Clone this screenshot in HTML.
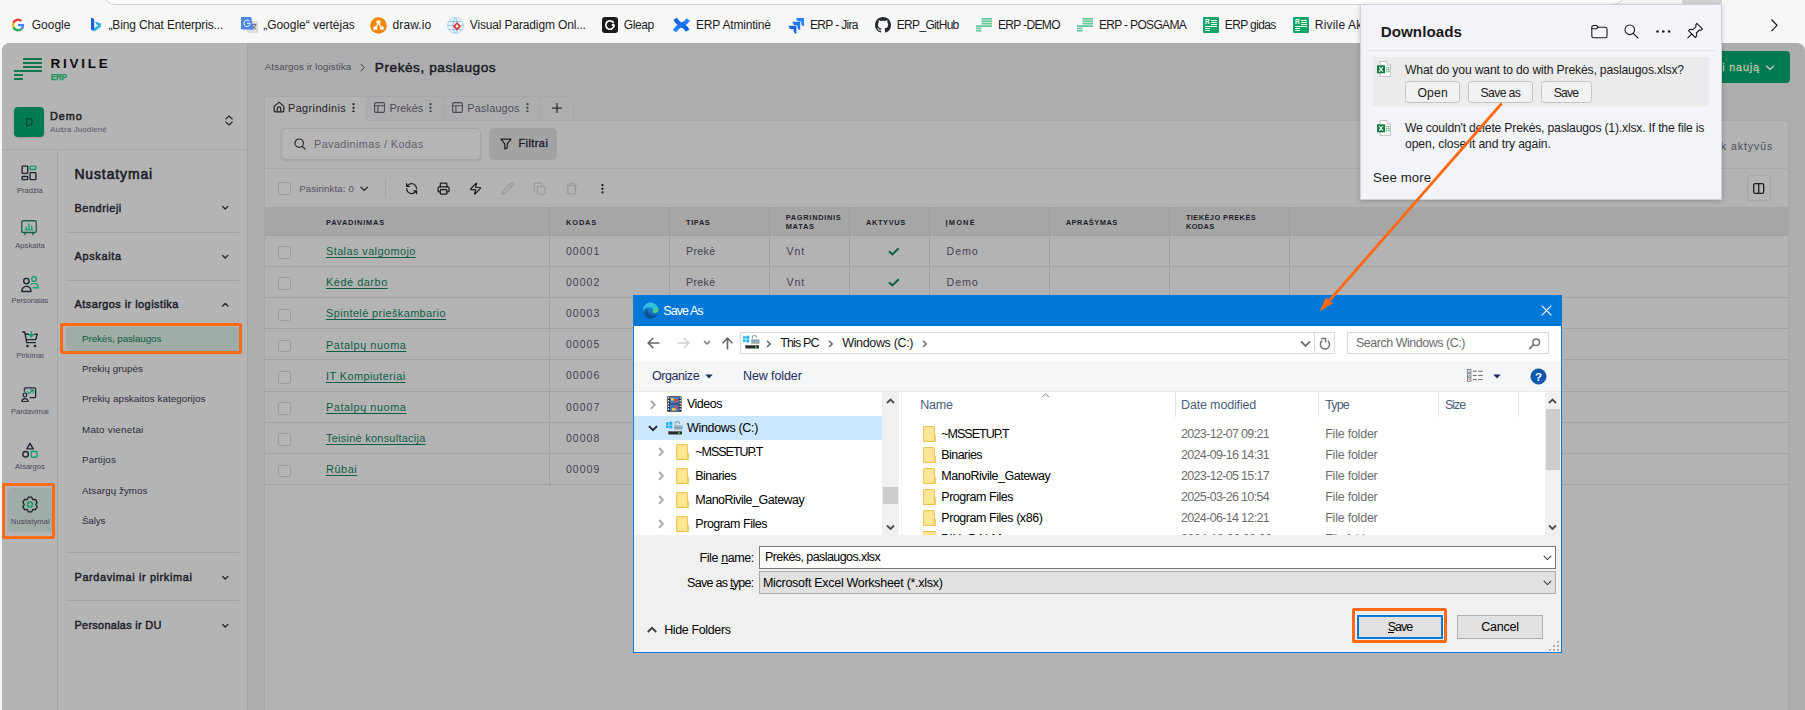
<!DOCTYPE html><html><head><meta charset="utf-8"><title>Save As</title><style>
*{margin:0;padding:0;box-sizing:border-box}
html,body{width:1805px;height:710px;overflow:hidden;background:#f7f7f7}
body{font-family:"Liberation Sans",sans-serif;position:relative}
.b{position:absolute;display:block}
.t,.t2{position:absolute;display:block;white-space:pre;line-height:1;font-family:"Liberation Sans",sans-serif}
</style></head><body>
<div class="b" style="left:0px;top:0px;width:1805px;height:43px;background:#f7f7f7;"></div>
<div class="b" style="left:102.5px;top:-20px;width:1522.5px;height:24.8px;background:#ffffff;border-radius:12px;border:1px solid #d2d2d2;"></div>
<div class="b" style="left:1682px;top:-4px;width:40px;height:7.6px;background:#d4d4d4;border-radius:3px;"></div>
<span class="t" style="left:31.700000000000003px;top:19.000px;font-size:12px;color:#1b1b1b;letter-spacing:0.019px;">Google</span>
<span class="t" style="left:108.5px;top:19.000px;font-size:12px;color:#1b1b1b;letter-spacing:-0.148px;">„Bing Chat Enterpris...</span>
<span class="t" style="left:263.2px;top:19.000px;font-size:12px;color:#1b1b1b;letter-spacing:-0.028px;">„Google“ vertėjas</span>
<span class="t" style="left:392.5px;top:19.000px;font-size:12px;color:#1b1b1b;letter-spacing:0.128px;">draw.io</span>
<span class="t" style="left:469.8px;top:19.000px;font-size:12px;color:#1b1b1b;letter-spacing:-0.146px;">Visual Paradigm Onl...</span>
<span class="t" style="left:623.7px;top:19.000px;font-size:12px;color:#1b1b1b;letter-spacing:-0.358px;">Gleap</span>
<span class="t" style="left:696.0px;top:19.000px;font-size:12px;color:#1b1b1b;letter-spacing:-0.180px;">ERP Atmintinė</span>
<span class="t" style="left:810.0px;top:19.000px;font-size:12px;color:#1b1b1b;letter-spacing:-0.663px;">ERP - Jira</span>
<span class="t" style="left:896.8px;top:19.000px;font-size:12px;color:#1b1b1b;letter-spacing:-0.689px;">ERP_GitHub</span>
<span class="t" style="left:997.9px;top:19.000px;font-size:12px;color:#1b1b1b;letter-spacing:-0.650px;">ERP -DEMO</span>
<span class="t" style="left:1099.0px;top:19.000px;font-size:12px;color:#1b1b1b;letter-spacing:-0.668px;">ERP - POSGAMA</span>
<span class="t" style="left:1224.8px;top:19.000px;font-size:12px;color:#1b1b1b;letter-spacing:-0.623px;">ERP gidas</span>
<span class="t" style="left:1314.8px;top:19.000px;font-size:12px;color:#1b1b1b;letter-spacing:0.186px;">Rivile Ak</span>
<svg class="b" style="left:10.3px;top:17px;" width="16" height="16" viewBox="0 0 16 16"><circle cx="8" cy="8" r="8" fill="#fff"/>
<path d="M14.2 8.15c0-.5-.04-.87-.13-1.25H8.1v2.28h3.5c-.07.57-.45 1.42-1.3 2l2 1.56c1.2-1.1 1.9-2.74 1.9-4.6z" fill="#4285f4"/>
<path d="M8.1 14.4c1.72 0 3.17-.57 4.22-1.55l-2-1.56c-.54.38-1.26.64-2.2.64-1.7 0-3.12-1.1-3.63-2.65l-2.07 1.6C3.46 12.96 5.6 14.4 8.1 14.4z" fill="#34a853"/>
<path d="M4.47 9.28A3.9 3.9 0 0 1 4.26 8c0-.44.08-.87.2-1.27L2.4 5.12A6.4 6.4 0 0 0 1.7 8c0 1.03.25 2 .7 2.87l2.07-1.6z" fill="#fbbc05"/>
<path d="M8.1 4.07c1.2 0 2 .52 2.47.95l1.8-1.76C11.26 2.23 9.82 1.6 8.1 1.6 5.6 1.6 3.46 3.04 2.4 5.12l2.07 1.6C4.98 5.18 6.4 4.07 8.1 4.07z" fill="#ea4335"/></svg>
<svg class="b" style="left:88.3px;top:17px;" width="16" height="16" viewBox="0 0 16 16"><defs><linearGradient id="bg1" x1="0" y1="0" x2="1" y2="1"><stop offset="0" stop-color="#2a7be4"/><stop offset="1" stop-color="#35d0e6"/></linearGradient></defs>
<path d="M3 .8l3.1 1.1v9l4.2-2.3-2-1-1.3-3.1 6 2.1v3.3L6.2 14.6 3 12.8z" fill="url(#bg1)"/>
<path d="M3 .8l3.1 1.1v10.9L3 12.8z" fill="#1b5fd6"/></svg>
<svg class="b" style="left:240.8px;top:17.3px;" width="17" height="17" viewBox="0 0 17 17"><rect x="6" y="4" width="11" height="12" rx="1.2" fill="#dcdcdc"/>
<path d="M10.5 7.5h5M13 6.5v1M11.3 7.5c.4 2 2 3.8 3.9 4.6M14.8 7.5c-.5 2-2 3.9-4 4.8" stroke="#5f6368" stroke-width=".9" fill="none"/>
<path d="M1.2 0h9l2.3 12.5H1.2A1.2 1.2 0 0 1 0 11.3V1.2A1.2 1.2 0 0 1 1.2 0z" fill="#4a86e8"/>
<path d="M6 6.2h3c0 2-1.3 3.3-3 3.3a3.2 3.2 0 1 1 2.2-5.6" stroke="#fff" stroke-width="1" fill="none"/></svg>
<svg class="b" style="left:370px;top:17px;" width="17" height="17" viewBox="0 0 17 17"><circle cx="8.5" cy="8.5" r="8.3" fill="#f08705"/>
<path d="M8.5 6l-3.2 5M8.5 6l3.2 5" stroke="#fff" stroke-width="1.2"/>
<rect x="6.6" y="3.6" width="3.8" height="3.2" rx=".6" fill="#fff"/><rect x="3.4" y="9.6" width="3.8" height="3.2" rx=".6" fill="#fff"/><rect x="9.8" y="9.6" width="3.8" height="3.2" rx=".6" fill="#fff"/></svg>
<svg class="b" style="left:447px;top:17px;" width="17" height="17" viewBox="0 0 17 17"><circle cx="8.5" cy="8.5" r="8" fill="#e8f3fb" stroke="#9ecbe8" stroke-width=".8"/>
<path d="M1 8.5h15M8.5 1c-3 2-3 13 0 15M8.5 1c3 2 3 13 0 15M2.5 4.5h12M2.5 12.500h12" stroke="#6ab0dc" stroke-width=".7" fill="none"/>
<path d="M10 5l4 4.2-4 4.200-4-4.200z" fill="#e02b2b"/><path d="M10 7.300l1.800 1.900-1.800 1.900-1.800-1.900z" fill="#fff"/></svg>
<svg class="b" style="left:602px;top:17px;" width="16" height="16" viewBox="0 0 16 16"><rect width="16" height="16" rx="3" fill="#1a1a1a"/>
<path d="M11.300 5.400A4.200 4.200 0 1 0 12.200 8.300" stroke="#fff" stroke-width="1.700" fill="none" stroke-linecap="round"/><circle cx="11" cy="8" r="1.300" fill="#fff"/></svg>
<svg class="b" style="left:673.3px;top:17px;" width="17" height="16" viewBox="0 0 17 16"><defs><linearGradient id="cf1" x1="0" y1="0" x2="1" y2="0"><stop offset="0" stop-color="#0b5bd8"/><stop offset="1" stop-color="#2a86ff"/></linearGradient><linearGradient id="cf2" x1="1" y1="0" x2="0" y2="0"><stop offset="0" stop-color="#0b5bd8"/><stop offset="1" stop-color="#2a86ff"/></linearGradient></defs>
<path d="M2.200 1.800Q8.300 12.500 15.200 2.600" stroke="url(#cf1)" stroke-width="4.300" fill="none"/>
<path d="M1.600 14.200Q8.300 3.500 14.600 13.600" stroke="url(#cf2)" stroke-width="4.300" fill="none"/></svg>
<svg class="b" style="left:788px;top:17px;" width="17" height="17" viewBox="0 0 17 17"><path d="M16 1H8.300a3.500 3.500 0 0 0 3.500 3.500h1.400v1.400A3.500 3.500 0 0 0 16 9.300z" fill="#2684ff"/>
<path d="M12.200 4.800H4.500A3.500 3.500 0 0 0 8 8.300h1.400v1.400a3.500 3.500 0 0 0 2.800 3.400z" fill="#2176ea"/>
<path d="M8.400 8.700H.7a3.500 3.500 0 0 0 3.500 3.500h1.400v1.400A3.500 3.500 0 0 0 8.400 17z" fill="#1c63d6"/></svg>
<svg class="b" style="left:875px;top:17px;" width="16" height="16" viewBox="0 0 16 16"><path fill="#24292f" d="M8 0C3.580 0 0 3.580 0 8c0 3.540 2.290 6.530 5.470 7.590.4.070.55-.17.55-.38 0-.19-.01-.82-.01-1.490-2.010.37-2.530-.49-2.690-.94-.09-.23-.48-.94-.82-1.130-.28-.15-.68-.52-.01-.53.630-.01 1.080.58 1.230.82.720 1.210 1.870.87 2.330.66.070-.52.280-.87.510-1.070-1.780-.2-3.640-.89-3.640-3.950 0-.87.310-1.590.82-2.150-.08-.2-.36-1.020.08-2.120 0 0 .67-.21 2.200.82.640-.18 1.320-.27 2-.27s1.360.09 2 .27c1.530-1.040 2.200-.82 2.200-.82.440 1.100.16 1.920.08 2.120.51.560.82 1.270.82 2.150 0 3.070-1.870 3.750-3.650 3.950.29.250.54.730.54 1.480 0 1.070-.01 1.930-.01 2.200 0 .21.150.46.550.38A8.010 8.010 0 0 0 16 8c0-4.420-3.580-8-8-8z"/></svg>
<svg class="b" style="left:976px;top:17px;" width="17" height="17" viewBox="0 0 17 17"><g fill="#63c79b"><rect x="5.500" y="1" width="10.500" height="1.700"/><rect x="5.500" y="3.400" width="10.500" height="1.700"/><rect x="5.500" y="5.800" width="10.500" height="1.700"/>
<rect x="0" y="8.200" width="16" height="1.800"/><rect x="0" y="10.700" width="5.500" height="1.600"/><rect x="0" y="13" width="5.500" height="1.600"/></g></svg>
<svg class="b" style="left:1077px;top:17px;" width="17" height="17" viewBox="0 0 17 17"><g fill="#63c79b"><rect x="5.500" y="1" width="10.500" height="1.700"/><rect x="5.500" y="3.400" width="10.500" height="1.700"/><rect x="5.500" y="5.800" width="10.500" height="1.700"/>
<rect x="0" y="8.200" width="16" height="1.800"/><rect x="0" y="10.700" width="5.500" height="1.600"/><rect x="0" y="13" width="5.500" height="1.600"/></g></svg>
<svg class="b" style="left:1203px;top:17px;" width="16" height="16" viewBox="0 0 16 16"><rect width="16" height="16" rx="1" fill="#12a568"/>
<text x="2" y="7.300" font-family="Liberation Sans" font-weight="700" font-size="6.500" fill="#fff">R</text>
<g fill="#e9fff4"><rect x="8" y="3" width="6" height="1"/><rect x="8" y="5" width="6" height="1"/><rect x="8" y="7" width="6" height="1"/><rect x="2" y="9" width="12" height="1"/><rect x="2" y="11" width="5" height="1"/><rect x="2" y="13" width="5" height="1"/></g></svg>
<svg class="b" style="left:1293px;top:17px;" width="16" height="16" viewBox="0 0 16 16"><rect width="16" height="16" rx="1" fill="#12a568"/>
<text x="2" y="7.300" font-family="Liberation Sans" font-weight="700" font-size="6.500" fill="#fff">R</text>
<g fill="#e9fff4"><rect x="8" y="3" width="6" height="1"/><rect x="8" y="5" width="6" height="1"/><rect x="8" y="7" width="6" height="1"/><rect x="2" y="9" width="12" height="1"/><rect x="2" y="11" width="5" height="1"/><rect x="2" y="13" width="5" height="1"/></g></svg>
<svg class="b" style="left:1768px;top:17px;" width="14" height="16" viewBox="0 0 14 16"><path d="M3.500 2.500l5.500 5.800-5.500 5.800" stroke="#1b1b1b" stroke-width="1.200" fill="none"/></svg>
<div class="b" style="left:2px;top:43px;width:1803px;height:667px;background:#adadaf;border-radius:8px 8px 0 0;"></div>
<div class="b" style="left:2px;top:43px;width:245px;height:667px;background:#b4b4b4;border-radius:8px 0 0 0;"></div>
<div class="b" style="left:247px;top:43px;width:1px;height:667px;background:#a4a4a4;"></div>
<div class="b" style="left:23.1px;top:58px;width:18.8px;height:2px;background:#0d7a4d;"></div>
<div class="b" style="left:23.1px;top:62px;width:18.8px;height:2px;background:#0d7a4d;"></div>
<div class="b" style="left:23.1px;top:66px;width:18.8px;height:2px;background:#0d7a4d;"></div>
<div class="b" style="left:14.1px;top:70px;width:27.8px;height:2px;background:#0d7a4d;"></div>
<div class="b" style="left:14.1px;top:74px;width:9.2px;height:2px;background:#0d7a4d;"></div>
<div class="b" style="left:14.1px;top:78px;width:9.2px;height:1.9px;background:#0d7a4d;"></div>
<span class="t" style="left:50.4px;top:57.000px;font-size:13.5px;color:#0c0c0c;font-weight:700;letter-spacing:2.757px;">RIVILE</span>
<span class="t" style="left:50.7px;top:74.000px;font-size:8.2px;color:#1e9560;font-weight:700;letter-spacing:-0.222px;-webkit-text-stroke:.25px #1e9560;">ERP</span>
<div class="b" style="left:14px;top:107px;width:30px;height:30px;background:#007a53;border-radius:4px;box-shadow:0 1px 2px rgba(0,0,0,.15);"></div>
<span class="t" style="left:25.2px;top:117.000px;font-size:11px;color:#0b3d2c;">D</span>
<span class="t" style="left:50px;top:111.000px;font-size:10.8px;color:#1c1c1c;letter-spacing:0.996px;-webkit-text-stroke:.5px #1c1c1c;">Demo</span>
<span class="t" style="left:50px;top:126.000px;font-size:8px;color:#5c5867;letter-spacing:0.093px;">Aušra Juodienė</span>
<svg class="b" style="left:224px;top:115px;" width="10" height="11" viewBox="0 0 10 11"><path d="M1.800 4l3.200-3 3.200 3M1.800 7l3.200 3 3.200-3" stroke="#222" stroke-width="1.100" fill="none" stroke-linecap="round" stroke-linejoin="round"/></svg>
<div class="b" style="left:2px;top:149px;width:245px;height:1px;background:#a6a6a6;"></div>
<div class="b" style="left:57px;top:150px;width:1px;height:560px;background:#a6a6a6;"></div>
<svg class="b" style="left:21.1px;top:165.1px;" width="16" height="16" viewBox="0 0 16 16"><rect x="1.100" y="1.100" width="5.600" height="7.300" rx=".600" stroke="#1e2430" stroke-width="1.350" fill="none" stroke-linecap="round" stroke-linejoin="round"/><rect x="1.100" y="11.500" width="5.600" height="3.100" rx=".600" stroke="#1e2430" stroke-width="1.350" fill="none" stroke-linecap="round" stroke-linejoin="round"/><rect x="9.100" y="7.600" width="5.800" height="7" rx=".600" stroke="#1e2430" stroke-width="1.350" fill="none" stroke-linecap="round" stroke-linejoin="round"/><rect x="9.100" y="1.100" width="5.800" height="3.400" rx=".600" stroke="#12a06e" stroke-width="1.350" fill="none" stroke-linecap="round" stroke-linejoin="round"/></svg>
<svg class="b" style="left:21.1px;top:220.1px;" width="16" height="16" viewBox="0 0 16 16"><rect x=".700" y=".700" width="14.600" height="11.800" rx="1.500" stroke="#1f5f49" stroke-width="1.350" fill="none"/><path d="M4.600 12.600l-.800 2M11.400 12.600l.800 2" stroke="#1f5f49" stroke-width="1.350" stroke-linecap="round"/><path d="M4.300 9.800h7.400M5.300 9.600v-2.200M8 9.600v-5.600M10.700 9.600v-3.400" stroke="#12a06e" stroke-width="1.350" fill="none" stroke-linecap="round" stroke-linejoin="round"/></svg>
<svg class="b" style="left:20.5px;top:275.5px;" width="18" height="17" viewBox="0 0 18 17"><circle cx="5.400" cy="5" r="2.700" stroke="#1e2430" stroke-width="1.350" fill="none" stroke-linecap="round" stroke-linejoin="round"/><path d="M.800 15.500c0-3.200 2-5.100 4.600-5.100s4.600 1.900 4.600 5.100z" stroke="#1e2430" stroke-width="1.350" fill="none" stroke-linecap="round" stroke-linejoin="round"/><circle cx="13.100" cy="3" r="2.400" stroke="#12a06e" stroke-width="1.350" fill="none" stroke-linecap="round" stroke-linejoin="round"/><path d="M10 8.300c.8-.7 1.900-1 3.100-1 2.300 0 4.100 1.600 4.100 4.400h-5" stroke="#12a06e" stroke-width="1.350" fill="none" stroke-linecap="round" stroke-linejoin="round"/></svg>
<svg class="b" style="left:21.5px;top:330.5px;" width="17" height="17" viewBox="0 0 17 17"><path d="M.700 1h2l2 10.600h8.800M4.200 8.600h9.500l1.600-5.400h-2.500M3.300 3.200h3" stroke="#1e2430" stroke-width="1.350" fill="none" stroke-linecap="round" stroke-linejoin="round"/><circle cx="5.500" cy="15" r="1.300" fill="#1e2430"/><circle cx="13" cy="15" r="1.300" fill="#1e2430"/><path d="M9.300 .600v4.600M7.300 3.600l2 2.300 2-2.300z" stroke="#12a06e" stroke-width="1.400" fill="#12a06e" stroke-linejoin="round"/></svg>
<svg class="b" style="left:21.3px;top:386.7px;" width="15.81" height="15.81" viewBox="0 0 17 17"><path d="M3.600 4.500v-2.200a1.300 1.300 0 0 1 1.300-1.300h9.500a1.300 1.300 0 0 1 1.300 1.300v7.800a1.300 1.300 0 0 1-1.300 1.300h-4.600" stroke="#1e2430" stroke-width="1.350" fill="none" stroke-linecap="round" stroke-linejoin="round"/><circle cx="4.200" cy="8.600" r="2" stroke="#1e2430" stroke-width="1.350" fill="none" stroke-linecap="round" stroke-linejoin="round"/><path d="M.900 15.800c0-2 1.400-3.200 3.300-3.200s3.300 1.200 3.300 3.200z" stroke="#1e2430" stroke-width="1.350" fill="none" stroke-linecap="round" stroke-linejoin="round"/><path d="M6.500 5l2 2 4.500-3.800M10.300 3h2.900v2.900" stroke="#12a06e" stroke-width="1.350" fill="none" stroke-linecap="round" stroke-linejoin="round"/></svg>
<svg class="b" style="left:21.5px;top:441.5px;" width="17" height="16" viewBox="0 0 17 16"><path d="M8 1.300l3.200 5.500h-6.400z" stroke="#1e2430" stroke-width="1.350" fill="none" stroke-linecap="round" stroke-linejoin="round"/><circle cx="3.600" cy="12.300" r="2.800" stroke="#1e2430" stroke-width="1.350" fill="none" stroke-linecap="round" stroke-linejoin="round"/><rect x="9.300" y="9.500" width="5.700" height="5.700" rx=".800" stroke="#12a06e" stroke-width="1.350" fill="none" stroke-linecap="round" stroke-linejoin="round"/></svg>
<div class="b" style="left:8px;top:488px;width:44px;height:44px;background:#a0aca6;border-radius:4px;"></div>
<svg class="b" style="left:21.5px;top:496px;" width="16" height="17" viewBox="0 0 16 17"><path d="M9.69 1.19L6.31 1.19L5.15 3.56L2.51 3.39L0.83 6.31L2.30 8.50L0.83 10.69L2.51 13.61L5.15 13.44L6.31 15.81L9.69 15.81L10.85 13.44L13.49 13.61L15.17 10.69L13.70 8.50L15.17 6.31L13.49 3.39L10.85 3.56z" stroke="#1e2430" stroke-width="1.300" fill="none" stroke-linejoin="round"/><circle cx="8" cy="8.500" r="2.500" stroke="#12a06e" stroke-width="1.500" fill="none"/></svg>
<span class="t" style="left:16.9px;top:187.000px;font-size:7.6px;color:#4a4656;letter-spacing:0.008px;">Pradžia</span>
<span class="t" style="left:15.2px;top:242.000px;font-size:7.6px;color:#4a4656;letter-spacing:0.066px;">Apskaita</span>
<span class="t" style="left:11.5px;top:297.000px;font-size:7.6px;color:#4a4656;letter-spacing:-0.122px;">Personalas</span>
<span class="t" style="left:16.3px;top:352.000px;font-size:7.6px;color:#4a4656;letter-spacing:0.069px;">Pirkimai</span>
<span class="t" style="left:11px;top:408.000px;font-size:7.6px;color:#4a4656;letter-spacing:-0.020px;">Pardavimai</span>
<span class="t" style="left:15px;top:463.000px;font-size:7.6px;color:#4a4656;letter-spacing:-0.024px;">Atsargos</span>
<span class="t" style="left:10.8px;top:518.000px;font-size:7.6px;color:#4a4656;letter-spacing:0.113px;">Nustatymai</span>
<span class="t" style="left:74.4px;top:168.000px;font-size:13.9px;color:#1d1d27;letter-spacing:0.924px;-webkit-text-stroke:.6px #1d1d27;">Nustatymai</span>
<span class="t" style="left:74.5px;top:203.000px;font-size:10.9px;color:#1d1d27;letter-spacing:0.551px;-webkit-text-stroke:.45px #1d1d27;">Bendrieji</span>
<svg class="b" style="left:220.60000000000002px;top:204.3px;" width="8.4" height="7.4" viewBox="0 0 8.4 7.4"><path d="M1.600 2.400l2.600 2.600 2.600-2.600" stroke="#222" stroke-width="1.350" fill="none" stroke-linecap="round" stroke-linejoin="round"/></svg>
<span class="t" style="left:74.5px;top:251.000px;font-size:10.9px;color:#1d1d27;letter-spacing:0.674px;-webkit-text-stroke:.45px #1d1d27;">Apskaita</span>
<svg class="b" style="left:220.60000000000002px;top:252.7px;" width="8.4" height="7.4" viewBox="0 0 8.4 7.4"><path d="M1.600 2.400l2.600 2.600 2.600-2.600" stroke="#222" stroke-width="1.350" fill="none" stroke-linecap="round" stroke-linejoin="round"/></svg>
<span class="t" style="left:74.5px;top:299.000px;font-size:10.9px;color:#1d1d27;letter-spacing:0.469px;-webkit-text-stroke:.45px #1d1d27;">Atsargos ir logistika</span>
<svg class="b" style="left:220.60000000000002px;top:300.6px;" width="8.4" height="7.4" viewBox="0 0 8.4 7.4"><path d="M1.600 5l2.600-2.600 2.600 2.600" stroke="#222" stroke-width="1.350" fill="none" stroke-linecap="round" stroke-linejoin="round"/></svg>
<span class="t" style="left:74.5px;top:572.000px;font-size:10.9px;color:#1d1d27;letter-spacing:0.629px;-webkit-text-stroke:.45px #1d1d27;">Pardavimai ir pirkimai</span>
<svg class="b" style="left:220.60000000000002px;top:573.5px;" width="8.4" height="7.4" viewBox="0 0 8.4 7.4"><path d="M1.600 2.400l2.600 2.600 2.600-2.600" stroke="#222" stroke-width="1.350" fill="none" stroke-linecap="round" stroke-linejoin="round"/></svg>
<span class="t" style="left:74.5px;top:620.000px;font-size:10.9px;color:#1d1d27;letter-spacing:0.298px;-webkit-text-stroke:.45px #1d1d27;">Personalas ir DU</span>
<svg class="b" style="left:220.60000000000002px;top:621.5px;" width="8.4" height="7.4" viewBox="0 0 8.4 7.4"><path d="M1.600 2.400l2.600 2.600 2.600-2.600" stroke="#222" stroke-width="1.350" fill="none" stroke-linecap="round" stroke-linejoin="round"/></svg>
<div class="b" style="left:66px;top:232px;width:173px;height:1px;background:#a3a3a3;"></div>
<div class="b" style="left:66px;top:280px;width:173px;height:1px;background:#a3a3a3;"></div>
<div class="b" style="left:66px;top:552px;width:173px;height:1px;background:#a3a3a3;"></div>
<div class="b" style="left:66px;top:600px;width:173px;height:1px;background:#a3a3a3;"></div>
<div class="b" style="left:65.5px;top:326.5px;width:174px;height:24.5px;background:#a0aca6;border-radius:4px;"></div>
<span class="t" style="left:82px;top:334.000px;font-size:9.8px;color:#0b5e45;letter-spacing:-0.082px;">Prekės, paslaugos</span>
<span class="t" style="left:82px;top:364.000px;font-size:9.8px;color:#2a2a34;letter-spacing:0.029px;">Prekių grupės</span>
<span class="t" style="left:82px;top:394.000px;font-size:9.8px;color:#2a2a34;letter-spacing:0.056px;">Prekių apskaitos kategorijos</span>
<span class="t" style="left:82px;top:425.000px;font-size:9.8px;color:#2a2a34;letter-spacing:0.252px;">Mato vienetai</span>
<span class="t" style="left:82px;top:455.000px;font-size:9.8px;color:#2a2a34;letter-spacing:0.161px;">Partijos</span>
<span class="t" style="left:82px;top:486.000px;font-size:9.8px;color:#2a2a34;letter-spacing:0.059px;">Atsargų žymos</span>
<span class="t" style="left:82px;top:516.000px;font-size:9.8px;color:#2a2a34;letter-spacing:-0.167px;">Šalys</span>
<span class="t" style="left:264.8px;top:62.000px;font-size:9.7px;color:#4e4e58;letter-spacing:0.115px;">Atsargos ir logistika</span>
<svg class="b" style="left:358px;top:62.5px;" width="9" height="9" viewBox="0 0 9 9"><path d="M3 1.200l3.300 3.300L3 7.800" stroke="#444" stroke-width="1" fill="none" stroke-linecap="round" stroke-linejoin="round"/></svg>
<span class="t" style="left:374.8px;top:61.000px;font-size:13.6px;color:#1d1d27;letter-spacing:0.560px;-webkit-text-stroke:.5px #1d1d27;">Prekės, paslaugos</span>
<div class="b" style="left:1700px;top:51px;width:90px;height:31.6px;background:#007a53;border-radius:4px;"></div>
<span class="t" style="left:1718.3px;top:62.000px;font-size:10.8px;color:#bfc7a6;letter-spacing:0.853px;-webkit-text-stroke:.3px #bfc7a6;">ti naują</span>
<svg class="b" style="left:1765px;top:64px;" width="10" height="8" viewBox="0 0 10 8"><path d="M1.500 2l3.500 3.500L8.500 2" stroke="#c3cdb9" stroke-width="1.300" fill="none" stroke-linecap="round" stroke-linejoin="round"/></svg>
<div class="b" style="left:365.7px;top:96.4px;width:78.3px;height:24px;background:#aeaeb0;border:1px solid #a8a8aa;border-bottom:none;border-radius:4px 4px 0 0;"></div>
<div class="b" style="left:443px;top:96.4px;width:97.7px;height:24px;background:#aeaeb0;border:1px solid #a8a8aa;border-bottom:none;border-radius:4px 4px 0 0;"></div>
<div class="b" style="left:539.7px;top:96.4px;width:34.3px;height:24px;background:#aeaeb0;border:1px solid #a8a8aa;border-bottom:none;border-radius:4px 4px 0 0;"></div>
<div class="b" style="left:264.3px;top:119.8px;width:1525.2px;height:600px;background:#b3b3b3;border:1px solid #a7a7a8;border-radius:0 4px 0 0;"></div>
<div class="b" style="left:264.3px;top:96.4px;width:103px;height:24.6px;background:#b3b3b3;border:1px solid #a7a7a8;border-bottom:none;border-radius:4px 4px 0 0;"></div>
<svg class="b" style="left:272.5px;top:101.3px;" width="12" height="12" viewBox="0 0 12 12"><path d="M1.200 5.400L6 1.100l4.800 4.300v4.400a1 1 0 0 1-1 1H2.200a1 1 0 0 1-1-1z" stroke="#222" stroke-width="1.200" fill="none" stroke-linejoin="round"/><path d="M4.300 10.600v-3a1.700 1.700 0 0 1 3.400 0v3" stroke="#222" stroke-width="1.200" fill="none"/></svg>
<span class="t" style="left:288px;top:103.000px;font-size:10.9px;color:#1d1d27;letter-spacing:0.391px;">Pagrindinis</span>
<svg class="b" style="left:351.9px;top:102.5px;" width="3" height="9.6" viewBox="0 0 3 9.6"><g fill="#222"><circle cx="1.500" cy="1.150" r="1.130"/><circle cx="1.500" cy="4.800" r="1.130"/><circle cx="1.500" cy="8.450" r="1.130"/></g></svg>
<svg class="b" style="left:373.8px;top:102px;" width="11" height="11" viewBox="0 0 11 11"><rect x=".600" y=".600" width="9.800" height="9.800" rx="1.400" stroke="#4a4a52" stroke-width="1.100" fill="none"/><path d="M.600 3.800h9.800M3.900 3.800v6.600" stroke="#4a4a52" stroke-width="1.100"/></svg>
<span class="t" style="left:389.5px;top:103.000px;font-size:10.9px;color:#4e4e58;letter-spacing:-0.061px;">Prekės</span>
<svg class="b" style="left:428.8px;top:102.5px;" width="3" height="9.6" viewBox="0 0 3 9.6"><g fill="#444"><circle cx="1.500" cy="1.150" r="1.130"/><circle cx="1.500" cy="4.800" r="1.130"/><circle cx="1.500" cy="8.450" r="1.130"/></g></svg>
<svg class="b" style="left:452px;top:102px;" width="11" height="11" viewBox="0 0 11 11"><rect x=".600" y=".600" width="9.800" height="9.800" rx="1.400" stroke="#4a4a52" stroke-width="1.100" fill="none"/><path d="M.600 3.800h9.800M3.900 3.800v6.600" stroke="#4a4a52" stroke-width="1.100"/></svg>
<span class="t" style="left:467.3px;top:103.000px;font-size:10.9px;color:#4e4e58;letter-spacing:0.168px;">Paslaugos</span>
<svg class="b" style="left:525.7px;top:102.5px;" width="3" height="9.6" viewBox="0 0 3 9.6"><g fill="#444"><circle cx="1.500" cy="1.150" r="1.130"/><circle cx="1.500" cy="4.800" r="1.130"/><circle cx="1.500" cy="8.450" r="1.130"/></g></svg>
<svg class="b" style="left:551.8px;top:103.1px;" width="10" height="10" viewBox="0 0 10 10"><path d="M5 .300v9.400M.300 5h9.400" stroke="#2d2d2d" stroke-width="1.250" stroke-linecap="round"/></svg>
<div class="b" style="left:280.8px;top:128px;width:200px;height:31.6px;background:#b5b5b5;border:1px solid #a5a5a5;border-radius:4.500px;box-shadow:0 1px 2px rgba(0,0,0,.10);"></div>
<svg class="b" style="left:293.5px;top:137.5px;" width="12" height="12" viewBox="0 0 12 12"><circle cx="5.200" cy="5.200" r="4.200" stroke="#2a2a2a" stroke-width="1.200" fill="none"/><path d="M8.300 8.300l2.700 2.700" stroke="#2a2a2a" stroke-width="1.200" stroke-linecap="round"/></svg>
<span class="t" style="left:314px;top:139.000px;font-size:10.8px;color:#625f68;letter-spacing:0.426px;">Pavadinimas / Kodas</span>
<div class="b" style="left:489px;top:128.4px;width:67.8px;height:31.2px;background:#a3a3a3;border-radius:5px;"></div>
<svg class="b" style="left:499.5px;top:137.5px;" width="12" height="12" viewBox="0 0 12 12"><path d="M1 1.200h10L7.200 5.900v4l-2.400 1v-5z" stroke="#1d1d1d" stroke-width="1.200" fill="none" stroke-linejoin="round"/></svg>
<span class="t" style="left:518.5px;top:138.000px;font-size:10.9px;color:#1d1d27;letter-spacing:0.446px;-webkit-text-stroke:.35px #1d1d27;">Filtrai</span>
<span class="t" style="left:1717.5px;top:141.000px;font-size:10.5px;color:#4e4e58;letter-spacing:0.966px;">ik aktyvūs</span>
<div class="b" style="left:265px;top:168px;width:1522px;height:1px;background:#a7a7a7;"></div>
<div class="b" style="left:278.2px;top:182.3px;width:12.6px;height:12.6px;background:#b6b6b6;border:1px solid #9a9a9a;border-radius:2.500px;"></div>
<span class="t" style="left:299.3px;top:184.000px;font-size:9.7px;color:#56525f;letter-spacing:0.099px;">Pasirinkta: 0</span>
<svg class="b" style="left:360px;top:185.5px;" width="8.4" height="6" viewBox="0 0 8.4 6"><path d="M1 1.200l3.200 3.200L7.400 1.200" stroke="#222" stroke-width="1.200" fill="none" stroke-linecap="round" stroke-linejoin="round"/></svg>
<div class="b" style="left:385.3px;top:178px;width:1px;height:20px;background:#a3a3a3;"></div>
<svg class="b" style="left:404.8px;top:182.1px;" width="13.2" height="13.2" viewBox="0 0 24 24"><g stroke="#1d1d1d" stroke-width="2.250" fill="none" stroke-linecap="round" stroke-linejoin="round"><path d="M21 12a9 9 0 0 0-9-9 9.750 9.750 0 0 0-6.740 2.740L3 8"/><path d="M3 3v5h5"/><path d="M3 12a9 9 0 0 0 9 9 9.750 9.750 0 0 0 6.740-2.740L21 16"/><path d="M16 16h5v5"/></g></svg>
<svg class="b" style="left:436.7px;top:182.1px;" width="13.2" height="13.2" viewBox="0 0 24 24"><g stroke="#1d1d1d" stroke-width="2.250" fill="none" stroke-linecap="round" stroke-linejoin="round"><path d="M6 18H4a2 2 0 0 1-2-2v-5a2 2 0 0 1 2-2h16a2 2 0 0 1 2 2v5a2 2 0 0 1-2 2h-2"/><path d="M6 9V3a1 1 0 0 1 1-1h10a1 1 0 0 1 1 1v6"/><rect x="6" y="14" width="12" height="8" rx="1"/></g></svg>
<svg class="b" style="left:468.8px;top:182.1px;" width="13.2" height="13.2" viewBox="0 0 24 24"><g stroke="#1d1d1d" stroke-width="2.250" fill="none" stroke-linecap="round" stroke-linejoin="round"><path d="M4 14a1 1 0 0 1-.780-1.630l9.900-10.200a.500.500 0 0 1 .860.460l-1.920 6.020A1 1 0 0 0 13 10h7a1 1 0 0 1 .780 1.630l-9.900 10.200a.500.500 0 0 1-.860-.460l1.920-6.020A1 1 0 0 0 11 14z"/></g></svg>
<svg class="b" style="left:500.8px;top:182.1px;" width="13.2" height="13.2" viewBox="0 0 24 24"><g stroke="#9b9b9b" stroke-width="2.250" fill="none" stroke-linecap="round" stroke-linejoin="round"><path d="M21.170 6.810a1 1 0 0 0-3.990-3.990L3.840 16.170a2 2 0 0 0-.500.830l-1.320 4.350a.500.500 0 0 0 .620.620l4.350-1.320a2 2 0 0 0 .830-.500z"/><path d="m15 5 4 4"/></g></svg>
<svg class="b" style="left:532.9px;top:182.1px;" width="13.2" height="13.2" viewBox="0 0 24 24"><g stroke="#9b9b9b" stroke-width="2.250" fill="none" stroke-linecap="round" stroke-linejoin="round"><rect width="14" height="14" x="8" y="8" rx="2"/><path d="M4 16c-1.100 0-2-.900-2-2V4c0-1.100.900-2 2-2h10c1.100 0 2 .900 2 2"/></g></svg>
<svg class="b" style="left:564.9px;top:182.1px;" width="13.2" height="13.2" viewBox="0 0 24 24"><g stroke="#9b9b9b" stroke-width="2.250" fill="none" stroke-linecap="round" stroke-linejoin="round"><path d="M3 6h18"/><path d="M19 6v14c0 1-1 2-2 2H7c-1 0-2-1-2-2V6"/><path d="M8 6V4c0-1 1-2 2-2h4c1 0 2 1 2 2v2"/></g></svg>
<svg class="b" style="left:600.5px;top:184.1px;" width="3" height="9.6" viewBox="0 0 3 9.6"><g fill="#1d1d1d"><circle cx="1.500" cy="1.150" r="1.130"/><circle cx="1.500" cy="4.800" r="1.130"/><circle cx="1.500" cy="8.450" r="1.130"/></g></svg>
<div class="b" style="left:1746.5px;top:175.3px;width:24.3px;height:25.4px;background:#b4b4b4;border:1px solid #a6a6a6;border-radius:4px;"></div>
<svg class="b" style="left:1753px;top:183px;" width="11.5" height="11" viewBox="0 0 11.5 11"><rect x=".700" y=".700" width="10" height="9.600" rx="1.400" stroke="#1d1d1d" stroke-width="1.300" fill="none"/><path d="M5.700 .700v9.600" stroke="#1d1d1d" stroke-width="1.300"/></svg>
<div class="b" style="left:265px;top:207.3px;width:1524px;height:28.5px;background:#a6a6a6;"></div>
<span class="t" style="left:326px;top:219.000px;font-size:7.4px;color:#1d1d27;font-weight:700;letter-spacing:0.801px;">PAVADINIMAS</span>
<span class="t" style="left:566px;top:219.000px;font-size:7.4px;color:#1d1d27;font-weight:700;letter-spacing:0.899px;">KODAS</span>
<span class="t" style="left:686px;top:219.000px;font-size:7.4px;color:#1d1d27;font-weight:700;letter-spacing:0.645px;">TIPAS</span>
<span class="t" style="left:785.7px;top:214.000px;font-size:7.4px;color:#1d1d27;font-weight:700;letter-spacing:0.719px;">PAGRINDINIS</span>
<span class="t" style="left:785.7px;top:223.000px;font-size:7.4px;color:#1d1d27;font-weight:700;letter-spacing:0.778px;">MATAS</span>
<span class="t" style="left:866px;top:219.000px;font-size:7.4px;color:#1d1d27;font-weight:700;letter-spacing:0.645px;">AKTYVUS</span>
<span class="t" style="left:945.5px;top:219.000px;font-size:7.4px;color:#1d1d27;font-weight:700;letter-spacing:1.216px;">ĮMONĖ</span>
<span class="t" style="left:1065.7px;top:219.000px;font-size:7.4px;color:#1d1d27;font-weight:700;letter-spacing:0.546px;">APRAŠYMAS</span>
<span class="t" style="left:1185.9px;top:214.000px;font-size:7.4px;color:#1d1d27;font-weight:700;letter-spacing:0.440px;">TIEKĖJO PREKĖS</span>
<span class="t" style="left:1185.9px;top:223.000px;font-size:7.4px;color:#1d1d27;font-weight:700;letter-spacing:0.399px;">KODAS</span>
<div class="b" style="left:265px;top:265.73px;width:1524px;height:1px;background:#a3a3a3;"></div>
<div class="b" style="left:278.2px;top:246.1px;width:12.6px;height:12.6px;background:#b6b6b6;border:1px solid #9a9a9a;border-radius:2.500px;"></div>
<span class="t" style="left:326px;top:246.000px;font-size:10.9px;color:#0b5e45;letter-spacing:0.424px;text-decoration:underline;text-decoration-thickness:.9px;text-underline-offset:1.600px;">Stalas valgomojo</span>
<span class="t" style="left:566px;top:246.000px;font-size:10.5px;color:#45424e;letter-spacing:1.024px;">00001</span>
<span class="t" style="left:686px;top:246.000px;font-size:10.6px;color:#45424e;letter-spacing:0.378px;">Prekė</span>
<span class="t" style="left:786.5px;top:246.000px;font-size:10.6px;color:#45424e;letter-spacing:0.947px;">Vnt</span>
<svg class="b" style="left:887.5px;top:246.9px;" width="12" height="9" viewBox="0 0 12 9"><path d="M1 4.300l3.300 3.200L10.800 1.200" stroke="#0b5e45" stroke-width="1.900" fill="none"/></svg>
<span class="t" style="left:946.5px;top:246.000px;font-size:10.6px;color:#45424e;letter-spacing:0.978px;">Demo</span>
<div class="b" style="left:265px;top:296.96000000000004px;width:1524px;height:1px;background:#a3a3a3;"></div>
<div class="b" style="left:278.2px;top:277.33000000000004px;width:12.6px;height:12.6px;background:#b6b6b6;border:1px solid #9a9a9a;border-radius:2.500px;"></div>
<span class="t" style="left:326px;top:277.000px;font-size:10.9px;color:#0b5e45;letter-spacing:0.541px;text-decoration:underline;text-decoration-thickness:.9px;text-underline-offset:1.600px;">Kėdė darbo</span>
<span class="t" style="left:566px;top:277.000px;font-size:10.5px;color:#45424e;letter-spacing:1.024px;">00002</span>
<span class="t" style="left:686px;top:277.000px;font-size:10.6px;color:#45424e;letter-spacing:0.378px;">Prekė</span>
<span class="t" style="left:786.5px;top:277.000px;font-size:10.6px;color:#45424e;letter-spacing:0.947px;">Vnt</span>
<svg class="b" style="left:887.5px;top:278.13000000000005px;" width="12" height="9" viewBox="0 0 12 9"><path d="M1 4.300l3.300 3.200L10.800 1.200" stroke="#0b5e45" stroke-width="1.900" fill="none"/></svg>
<span class="t" style="left:946.5px;top:277.000px;font-size:10.6px;color:#45424e;letter-spacing:0.978px;">Demo</span>
<div class="b" style="left:265px;top:328.19px;width:1524px;height:1px;background:#a3a3a3;"></div>
<div class="b" style="left:278.2px;top:308.56px;width:12.6px;height:12.6px;background:#b6b6b6;border:1px solid #9a9a9a;border-radius:2.500px;"></div>
<span class="t" style="left:326px;top:308.000px;font-size:10.9px;color:#0b5e45;letter-spacing:0.415px;text-decoration:underline;text-decoration-thickness:.9px;text-underline-offset:1.600px;">Spintelė prieškambario</span>
<span class="t" style="left:566px;top:308.000px;font-size:10.5px;color:#45424e;letter-spacing:1.024px;">00003</span>
<div class="b" style="left:265px;top:359.42px;width:1524px;height:1px;background:#a3a3a3;"></div>
<div class="b" style="left:278.2px;top:339.79px;width:12.6px;height:12.6px;background:#b6b6b6;border:1px solid #9a9a9a;border-radius:2.500px;"></div>
<span class="t" style="left:326px;top:340.000px;font-size:10.9px;color:#0b5e45;letter-spacing:0.545px;text-decoration:underline;text-decoration-thickness:.9px;text-underline-offset:1.600px;">Patalpų nuoma</span>
<span class="t" style="left:566px;top:339.000px;font-size:10.5px;color:#45424e;letter-spacing:1.024px;">00005</span>
<div class="b" style="left:265px;top:390.65000000000003px;width:1524px;height:1px;background:#a3a3a3;"></div>
<div class="b" style="left:278.2px;top:371.02000000000004px;width:12.6px;height:12.6px;background:#b6b6b6;border:1px solid #9a9a9a;border-radius:2.500px;"></div>
<span class="t" style="left:326px;top:371.000px;font-size:10.9px;color:#0b5e45;letter-spacing:0.432px;text-decoration:underline;text-decoration-thickness:.9px;text-underline-offset:1.600px;">IT Kompiuteriai</span>
<span class="t" style="left:566px;top:370.000px;font-size:10.5px;color:#45424e;letter-spacing:1.024px;">00006</span>
<div class="b" style="left:265px;top:421.88000000000005px;width:1524px;height:1px;background:#a3a3a3;"></div>
<div class="b" style="left:278.2px;top:402.25000000000006px;width:12.6px;height:12.6px;background:#b6b6b6;border:1px solid #9a9a9a;border-radius:2.500px;"></div>
<span class="t" style="left:326px;top:402.000px;font-size:10.9px;color:#0b5e45;letter-spacing:0.545px;text-decoration:underline;text-decoration-thickness:.9px;text-underline-offset:1.600px;">Patalpų nuoma</span>
<span class="t" style="left:566px;top:402.000px;font-size:10.5px;color:#45424e;letter-spacing:1.024px;">00007</span>
<div class="b" style="left:265px;top:453.11px;width:1524px;height:1px;background:#a3a3a3;"></div>
<div class="b" style="left:278.2px;top:433.48px;width:12.6px;height:12.6px;background:#b6b6b6;border:1px solid #9a9a9a;border-radius:2.500px;"></div>
<span class="t" style="left:326px;top:433.000px;font-size:10.9px;color:#0b5e45;letter-spacing:0.287px;text-decoration:underline;text-decoration-thickness:.9px;text-underline-offset:1.600px;">Teisinė konsultacija</span>
<span class="t" style="left:566px;top:433.000px;font-size:10.5px;color:#45424e;letter-spacing:1.024px;">00008</span>
<div class="b" style="left:265px;top:484.34000000000003px;width:1524px;height:1px;background:#a3a3a3;"></div>
<div class="b" style="left:278.2px;top:464.71000000000004px;width:12.6px;height:12.6px;background:#b6b6b6;border:1px solid #9a9a9a;border-radius:2.500px;"></div>
<span class="t" style="left:326px;top:464.000px;font-size:10.9px;color:#0b5e45;letter-spacing:0.558px;text-decoration:underline;text-decoration-thickness:.9px;text-underline-offset:1.600px;">Rūbai</span>
<span class="t" style="left:566px;top:464.000px;font-size:10.5px;color:#45424e;letter-spacing:1.024px;">00009</span>
<div class="b" style="left:549px;top:207.3px;width:1px;height:28.5px;background:#9c9c9c;"></div>
<div class="b" style="left:549px;top:235.8px;width:1px;height:250px;background:#a1a1a1;"></div>
<div class="b" style="left:669.3px;top:207.3px;width:1px;height:28.5px;background:#9c9c9c;"></div>
<div class="b" style="left:669.3px;top:235.8px;width:1px;height:250px;background:#a1a1a1;"></div>
<div class="b" style="left:769.2px;top:207.3px;width:1px;height:28.5px;background:#9c9c9c;"></div>
<div class="b" style="left:769.2px;top:235.8px;width:1px;height:250px;background:#a1a1a1;"></div>
<div class="b" style="left:849.1px;top:207.3px;width:1px;height:28.5px;background:#9c9c9c;"></div>
<div class="b" style="left:849.1px;top:235.8px;width:1px;height:250px;background:#a1a1a1;"></div>
<div class="b" style="left:929px;top:207.3px;width:1px;height:28.5px;background:#9c9c9c;"></div>
<div class="b" style="left:929px;top:235.8px;width:1px;height:250px;background:#a1a1a1;"></div>
<div class="b" style="left:1049.2px;top:207.3px;width:1px;height:28.5px;background:#9c9c9c;"></div>
<div class="b" style="left:1049.2px;top:235.8px;width:1px;height:250px;background:#a1a1a1;"></div>
<div class="b" style="left:1169.4px;top:207.3px;width:1px;height:28.5px;background:#9c9c9c;"></div>
<div class="b" style="left:1169.4px;top:235.8px;width:1px;height:250px;background:#a1a1a1;"></div>
<div class="b" style="left:1288.8px;top:207.3px;width:1px;height:28.5px;background:#9c9c9c;"></div>
<div class="b" style="left:1288.8px;top:235.8px;width:1px;height:250px;background:#a1a1a1;"></div>
<div class="b" style="left:265px;top:235.2px;width:1524px;height:1px;background:#a1a1a1;"></div>
<div class="b" style="left:1360px;top:4px;width:362px;height:196px;background:#f3f4f9;border:1px solid #cfcfd4;box-shadow:0 1px 5px rgba(0,0,0,.20);"></div>
<span class="t" style="left:1380.7px;top:24.000px;font-size:15.2px;color:#1a1a1a;font-weight:700;letter-spacing:0.036px;">Downloads</span>
<svg class="b" style="left:1590.5px;top:24px;" width="17" height="15" viewBox="0 0 17 15"><path d="M.800 3.300a1.800 1.800 0 0 1 1.800-1.800h3l1.600 1.800h7a1.800 1.800 0 0 1 1.800 1.800v6.800a1.800 1.800 0 0 1-1.800 1.800H2.600a1.800 1.800 0 0 1-1.800-1.800z" stroke="#1b1b1b" stroke-width="1.100" fill="none" stroke-linecap="round" stroke-linejoin="round"/><path d="M.800 4.700h4.600l1.800-1.400" stroke="#1b1b1b" stroke-width="1.100" fill="none" stroke-linecap="round" stroke-linejoin="round"/></svg>
<svg class="b" style="left:1623.5px;top:24px;" width="15" height="15" viewBox="0 0 15 15"><circle cx="5.800" cy="5.800" r="4.800" stroke="#1b1b1b" stroke-width="1.100" fill="none" stroke-linecap="round" stroke-linejoin="round"/><path d="M9.300 9.300l4.700 4.700" stroke="#1b1b1b" stroke-width="1.100" fill="none" stroke-linecap="round" stroke-linejoin="round"/></svg>
<svg class="b" style="left:1656px;top:29.5px;" width="15" height="3" viewBox="0 0 15 3"><g fill="#1b1b1b"><circle cx="1.500" cy="1.500" r="1.300"/><circle cx="7.300" cy="1.500" r="1.300"/><circle cx="13.100" cy="1.500" r="1.300"/></g></svg>
<svg class="b" style="left:1687px;top:22px;" width="17" height="17" viewBox="0 0 17 17"><path d="M9.800 1.300l5.600 5.600-1.300 1.300-1.700-.200-3 3 .300 3.100-1.400 1.400-6.800-6.800L2.900 7.300l3.100.300 3-3-.200-1.700zM4.900 11.800L.800 15.900" stroke="#1b1b1b" stroke-width="1.100" fill="none" stroke-linecap="round" stroke-linejoin="round"/></svg>
<div class="b" style="left:1367px;top:49.5px;width:348px;height:1px;background:#e2e3e8;"></div>
<div class="b" style="left:1373px;top:57px;width:336px;height:49.4px;background:#ebebeb;"></div>
<svg class="b" style="left:1377.3px;top:61.3px;" width="14" height="16" viewBox="0 0 14 16"><path d="M3 .500h7l3.500 3.500v11.500H3z" fill="#fff" stroke="#b7b7b7" stroke-width=".800"/><path d="M10 .500v3.500h3.500" fill="#f0f0f0" stroke="#b7b7b7" stroke-width=".700"/><g fill="#6dbb8e"><rect x="8.800" y="6" width="1.600" height="1.400"/><rect x="11" y="6" width="1.600" height="1.400"/><rect x="8.800" y="8" width="1.600" height="1.400"/><rect x="11" y="8" width="1.600" height="1.400"/><rect x="8.800" y="10" width="1.600" height="1.400"/><rect x="11" y="10" width="1.600" height="1.400"/></g><rect x="0" y="4.300" width="8" height="8" fill="#127c43"/><path d="M2.200 6l3.600 4.600M5.800 6L2.200 10.600" stroke="#fff" stroke-width="1.200"/></svg>
<span class="t" style="left:1405px;top:64.000px;font-size:12.2px;color:#1b1b1b;letter-spacing:-0.176px;">What do you want to do with Prekės, paslaugos.xlsx?</span>
<div class="b" style="left:1405.3px;top:81.4px;width:54.4px;height:21.2px;background:#f1f1f1;border:1px solid #c4c4c4;border-radius:3.500px;"></div>
<span class="t" style="left:1417.45px;top:87.000px;font-size:12.2px;color:#1b1b1b;letter-spacing:0.157px;">Open</span>
<div class="b" style="left:1468.3px;top:81.4px;width:64.5px;height:21.2px;background:#f1f1f1;border:1px solid #c4c4c4;border-radius:3.500px;"></div>
<span class="t" style="left:1480.5px;top:87.000px;font-size:12.2px;color:#1b1b1b;letter-spacing:-0.624px;">Save as</span>
<div class="b" style="left:1541px;top:81.4px;width:50.5px;height:21.2px;background:#f1f1f1;border:1px solid #c4c4c4;border-radius:3.500px;"></div>
<span class="t" style="left:1553.7px;top:87.000px;font-size:12.2px;color:#1b1b1b;letter-spacing:-0.827px;">Save</span>
<svg class="b" style="left:1377.3px;top:119.5px;" width="14" height="16" viewBox="0 0 14 16"><path d="M3 .500h7l3.500 3.500v11.500H3z" fill="#fff" stroke="#b7b7b7" stroke-width=".800"/><path d="M10 .500v3.500h3.500" fill="#f0f0f0" stroke="#b7b7b7" stroke-width=".700"/><g fill="#6dbb8e"><rect x="8.800" y="6" width="1.600" height="1.400"/><rect x="11" y="6" width="1.600" height="1.400"/><rect x="8.800" y="8" width="1.600" height="1.400"/><rect x="11" y="8" width="1.600" height="1.400"/><rect x="8.800" y="10" width="1.600" height="1.400"/><rect x="11" y="10" width="1.600" height="1.400"/></g><rect x="0" y="4.300" width="8" height="8" fill="#127c43"/><path d="M2.200 6l3.600 4.600M5.800 6L2.200 10.600" stroke="#fff" stroke-width="1.200"/></svg>
<span class="t" style="left:1405px;top:122.000px;font-size:12.2px;color:#1b1b1b;letter-spacing:-0.195px;">We couldn't delete Prekės, paslaugos (1).xlsx. If the file is</span>
<span class="t" style="left:1405px;top:138.000px;font-size:12.2px;color:#1b1b1b;letter-spacing:-0.117px;">open, close it and try again.</span>
<span class="t" style="left:1373px;top:171.000px;font-size:13.2px;color:#1b1b1b;letter-spacing:0.130px;">See more</span>
<div class="b" style="left:633px;top:295px;width:929px;height:358px;background:#f0f0f0;box-shadow:0 0 0 0 #000;"></div>
<div class="b" style="left:633px;top:295px;width:929px;height:31px;background:#0078d7;"></div>
<div class="b" style="left:634px;top:326px;width:927px;height:35px;background:#ffffff;"></div>
<div class="b" style="left:634px;top:361px;width:927px;height:30.5px;background:#f5f6f7;"></div>
<div class="b" style="left:634px;top:391px;width:927px;height:1px;background:#e9e9ea;"></div>
<div class="b" style="left:634px;top:392px;width:927px;height:143px;background:#ffffff;"></div>
<div class="b" style="left:633px;top:295px;width:929px;height:358px;border:1px solid #0078d7;"></div>
<svg class="b" style="left:641.5px;top:301.5px;" width="17" height="17" viewBox="0 0 17 17"><defs><linearGradient id="eg1" x1="0" y1="0" x2="1" y2="1"><stop offset="0" stop-color="#35c1f1"/><stop offset=".6" stop-color="#2bc3d2"/><stop offset="1" stop-color="#6fdc4a"/></linearGradient>
<linearGradient id="eg2" x1="0" y1="0" x2="0" y2="1"><stop offset="0" stop-color="#1b9de2"/><stop offset="1" stop-color="#0c59a4"/></linearGradient></defs>
<circle cx="8.500" cy="8.500" r="8" fill="url(#eg2)"/>
<path d="M.600 8.200A8 8 0 0 1 16.500 7.400c0 2.200-1.700 3.500-3.600 3.500-1.600 0-2.300-.700-2.300-1.300 0-.500.500-.700.500-1.600 0-1.500-1.500-2.700-3.300-2.700C4.600 5.300 1.500 6.300.600 8.200z" fill="url(#eg1)"/>
<path d="M6.700 16.300A6 6 0 0 1 3.200 11c0-2.300 1.400-3.900 3-4.600C5.400 7.300 5.300 8.900 5.900 10.300c.9 2.100 3 3.500 5.400 3.500 1.200 0 2.300-.300 3.100-.800-1.300 2.300-4.400 4-7.700 3.300z" fill="#0d4f94"/></svg>
<span class="t" style="left:663.3px;top:305.000px;font-size:12.5px;color:#ffffff;letter-spacing:-0.929px;">Save As</span>
<svg class="b" style="left:1540.5px;top:304.5px;" width="11" height="11" viewBox="0 0 11 11"><path d="M.700 .700l9.600 9.600M10.300 .700L.700 10.300" stroke="#fff" stroke-width="1.150"/></svg>
<svg class="b" style="left:646.5px;top:337px;" width="13" height="12" viewBox="0 0 13 12"><path d="M12.500 6H1.200M6.200 1L1.200 6l5 5" stroke="#666" stroke-width="1.600" fill="none" stroke-linecap="butt" stroke-linejoin="miter"/></svg>
<svg class="b" style="left:676.5px;top:337px;" width="13" height="12" viewBox="0 0 13 12"><path d="M.500 6h11.300M6.800 1l5 5-5 5" stroke="#d0d0d0" stroke-width="1.600" fill="none"/></svg>
<svg class="b" style="left:703px;top:340px;" width="8" height="6" viewBox="0 0 8 6"><path d="M1 1l3 3 3-3" stroke="#777" stroke-width="1.500" fill="none"/></svg>
<svg class="b" style="left:721px;top:336.5px;" width="13" height="13" viewBox="0 0 13 13"><path d="M6.500 12.500V1.200M1.500 6.200l5-5 5 5" stroke="#666" stroke-width="1.600" fill="none" stroke-linecap="butt" stroke-linejoin="miter"/></svg>
<div class="b" style="left:740px;top:332px;width:595px;height:22px;background:#fff;border:1px solid #d9d9d9;"></div>
<div class="b" style="left:1314px;top:333px;width:1px;height:20px;background:#d9d9d9;"></div>
<svg class="b" style="left:742.5px;top:334.5px;" width="17" height="14" viewBox="0 0 17 14"><g fill="#1fb3ef"><rect x="0" y="1.200" width="2.600" height="2.600"/><rect x="3.300" y=".700" width="3" height="3.100"/><rect x="0" y="4.400" width="2.600" height="2.600"/><rect x="3.300" y="4.400" width="3" height="3.100"/></g>
<path d="M9.300 4.200V2.500a2.100 2.100 0 0 1 4.200 0v.400" stroke="#9aa3aa" stroke-width="1.100" fill="none"/>
<rect x="8.200" y="4" width="8.300" height="5" fill="#b6bfc6"/><rect x="8.200" y="5.600" width="8.300" height="1" fill="#6f94b5"/><rect x="8.200" y="7.400" width="8.300" height=".700" fill="#8d979e"/>
<rect x="2.300" y="10" width="13.700" height="3.600" rx=".800" fill="#2c2c2c"/><rect x="2.300" y="10" width="13.700" height="1" rx=".500" fill="#6b6b6b"/><rect x="12" y="11.300" width="1.700" height="1.500" fill="#42e04a"/></svg>
<svg class="b" style="left:765.6999999999999px;top:339.6px;" width="6" height="8" viewBox="0 0 6 8"><path d="M1 .800l3.200 3.100-3.200 3.100" stroke="#6e6e6e" stroke-width="1.600" fill="none"/></svg>
<svg class="b" style="left:827.6px;top:339.6px;" width="6" height="8" viewBox="0 0 6 8"><path d="M1 .800l3.200 3.100-3.200 3.100" stroke="#6e6e6e" stroke-width="1.600" fill="none"/></svg>
<svg class="b" style="left:921.6px;top:339.6px;" width="6" height="8" viewBox="0 0 6 8"><path d="M1 .800l3.200 3.100-3.200 3.100" stroke="#6e6e6e" stroke-width="1.600" fill="none"/></svg>
<span class="t" style="left:780.2px;top:337.000px;font-size:12.5px;color:#141414;letter-spacing:-0.859px;">This PC</span>
<span class="t" style="left:842.2px;top:337.000px;font-size:12.5px;color:#141414;letter-spacing:-0.338px;">Windows (C:)</span>
<svg class="b" style="left:1299.5px;top:340px;" width="11" height="8" viewBox="0 0 11 8"><path d="M1 1.400l4.500 4.500 4.500-4.500" stroke="#6e6e6e" stroke-width="1.900" fill="none"/></svg>
<svg class="b" style="left:1319px;top:337px;" width="12" height="13" viewBox="0 0 12 13"><path d="M8.900 3.900A4.600 4.600 0 1 1 3.300 3.700" stroke="#737373" stroke-width="1.500" fill="none"/><path d="M2.100 1.600H6.600V5.600" stroke="#737373" stroke-width="1.500" fill="none"/></svg>
<div class="b" style="left:1347px;top:332px;width:202px;height:22px;background:#fff;border:1px solid #d9d9d9;"></div>
<span class="t" style="left:1356px;top:337.000px;font-size:12.5px;color:#6d6d6d;letter-spacing:-0.477px;">Search Windows (C:)</span>
<svg class="b" style="left:1528px;top:337px;" width="13" height="13" viewBox="0 0 13 13"><circle cx="8.200" cy="5.300" r="3.300" stroke="#6e6e6e" stroke-width="1.500" fill="none"/><path d="M5.800 7.700L1.200 11.800" stroke="#6e6e6e" stroke-width="1.700"/></svg>
<span class="t" style="left:652px;top:370.000px;font-size:12.5px;color:#1e2b5e;letter-spacing:-0.448px;">Organize</span>
<svg class="b" style="left:704.5px;top:374px;" width="8" height="5" viewBox="0 0 8 5"><path d="M.300 .500h7.400L4 4.500z" fill="#1e2b5e"/></svg>
<span class="t" style="left:743px;top:370.000px;font-size:12.5px;color:#1e2b5e;letter-spacing:-0.106px;">New folder</span>
<svg class="b" style="left:1466.5px;top:368.5px;" width="17" height="14" viewBox="0 0 17 14"><g stroke="#7a7a7a" stroke-width=".900" fill="#fff"><rect x=".500" y=".500" width="3.400" height="3.300"/><rect x=".500" y="4.700" width="3.400" height="3.300"/><rect x=".500" y="8.900" width="3.400" height="3.300"/></g>
<rect x="1.700" y="1.700" width="1" height="1" fill="#3c78d8"/><rect x="1.700" y="5.900" width="1" height="1" fill="#3c78d8"/><rect x="1.700" y="10.100" width="1" height="1" fill="#d83c3c"/>
<g stroke="#6a6a6a" stroke-width="1"><path d="M5.800 2.200h4M11.200 2.200h4.500M5.800 6.400h4M11.200 6.400h4.500M5.800 10.600h4M11.200 10.600h4.500"/></g></svg>
<svg class="b" style="left:1492.5px;top:374px;" width="8" height="5" viewBox="0 0 8 5"><path d="M.300 .500h7.400L4 4.500z" fill="#1e2b5e"/></svg>
<svg class="b" style="left:1529.5px;top:367.5px;" width="17" height="17" viewBox="0 0 17 17"><circle cx="8.500" cy="8.500" r="7.600" fill="#0c59b3" stroke="#08408a" stroke-width=".800"/><text x="8.500" y="12.600" text-anchor="middle" font-family="Liberation Sans" font-weight="700" font-size="11.500" fill="#fff">?</text></svg>
<div class="b" style="left:634px;top:416px;width:248px;height:24px;background:#cce8ff;"></div>
<div class="b" style="left:882px;top:392px;width:16.5px;height:143px;background:#f0f0f0;"></div>
<div class="b" style="left:883px;top:487.2px;width:14.6px;height:16.5px;background:#cdcdcd;"></div>
<div class="b" style="left:901px;top:392px;width:1px;height:143px;background:#f3f3f3;"></div>
<svg class="b" style="left:885.9px;top:398.3px;" width="9" height="6.6" viewBox="0 0 9 6.6"><path d="M1 5l3.500-3.500L8 5" stroke="#505050" stroke-width="1.900" fill="none"/></svg>
<svg class="b" style="left:885.9px;top:523.5px;" width="9" height="6.6" viewBox="0 0 9 6.6"><path d="M1 1.500L4.500 5 8 1.500" stroke="#505050" stroke-width="1.900" fill="none"/></svg>
<svg class="b" style="left:649.8px;top:399.5px;" width="6" height="9.6" viewBox="0 0 6 9.6"><path d="M1 .800l3.800 4-3.800 4" stroke="#a0a0a0" stroke-width="1.700" fill="none"/></svg>
<svg class="b" style="left:666.8px;top:396.4px;" width="15" height="16" viewBox="0 0 15 16"><rect x=".300" y=".300" width="14.200" height="15.400" fill="#1f1f1f"/><rect x="3" y="1" width="8.800" height="6.600" fill="#3c7fd6"/><rect x="3" y="8.400" width="8.800" height="6.600" fill="#3c7fd6"/>
<rect x="4" y="2" width="3" height="2.500" fill="#f2c230"/><rect x="7.300" y="3" width="3.200" height="3.500" fill="#d54a3a"/><rect x="5" y="12" width="4" height="2.500" fill="#f2c230"/><rect x="8" y="9.500" width="2.500" height="3" fill="#d54a3a"/>
<g fill="#fff"><rect x="1" y="1.200" width="1.300" height="1.500"/><rect x="1" y="4" width="1.300" height="1.500"/><rect x="1" y="6.800" width="1.300" height="1.500"/><rect x="1" y="9.600" width="1.300" height="1.500"/><rect x="1" y="12.400" width="1.300" height="1.500"/>
<rect x="12.500" y="1.200" width="1.300" height="1.500"/><rect x="12.500" y="4" width="1.300" height="1.500"/><rect x="12.500" y="6.800" width="1.300" height="1.500"/><rect x="12.500" y="9.600" width="1.300" height="1.500"/><rect x="12.500" y="12.400" width="1.300" height="1.500"/></g></svg>
<span class="t" style="left:687px;top:398.000px;font-size:12.5px;color:#000;letter-spacing:-0.520px;">Videos</span>
<svg class="b" style="left:647.6px;top:424.7px;" width="10" height="7" viewBox="0 0 10 7"><path d="M1 1.200l4 4 4-4" stroke="#262626" stroke-width="1.900" fill="none"/></svg>
<svg class="b" style="left:665.5px;top:420.5px;" width="17" height="14" viewBox="0 0 17 14"><g fill="#1fb3ef"><rect x="0" y="1.200" width="2.600" height="2.600"/><rect x="3.300" y=".700" width="3" height="3.100"/><rect x="0" y="4.400" width="2.600" height="2.600"/><rect x="3.300" y="4.400" width="3" height="3.100"/></g>
<path d="M9.300 4.200V2.500a2.100 2.100 0 0 1 4.200 0v.400" stroke="#9aa3aa" stroke-width="1.100" fill="none"/>
<rect x="8.200" y="4" width="8.300" height="5" fill="#b6bfc6"/><rect x="8.200" y="5.600" width="8.300" height="1" fill="#6f94b5"/><rect x="8.200" y="7.400" width="8.300" height=".700" fill="#8d979e"/>
<rect x="2.300" y="10" width="13.700" height="3.600" rx=".800" fill="#2c2c2c"/><rect x="2.300" y="10" width="13.700" height="1" rx=".500" fill="#6b6b6b"/><rect x="12" y="11.300" width="1.700" height="1.500" fill="#42e04a"/></svg>
<span class="t" style="left:687px;top:422.000px;font-size:12.5px;color:#000;letter-spacing:-0.338px;">Windows (C:)</span>
<svg class="b" style="left:657.8px;top:447.2px;" width="6" height="9.6" viewBox="0 0 6 9.6"><path d="M1 .800l3.800 4-3.800 4" stroke="#a0a0a0" stroke-width="1.700" fill="none"/></svg>
<svg class="b" style="left:676px;top:444.2px;" width="13" height="16" viewBox="0 0 13 16"><path d="M.500 1.200a.700.700 0 0 1 .700-.700h9.600a.700.700 0 0 1 .700.700V9h.800a.400.400 0 0 1 .400.400v5.600a.500.500 0 0 1-.500.500H.500z" fill="#fbe38e" stroke="#e8bf4a" stroke-width=".900"/><path d="M11.300 9.200v6" stroke="#e8bf4a" stroke-width=".800"/><path d="M1.400 1.400h9.200v13.200H1.400z" fill="#ffe79a" opacity=".6"/></svg>
<span class="t" style="left:695.3px;top:446.000px;font-size:12.5px;color:#000;letter-spacing:-1.015px;">~MSSETUP.T</span>
<svg class="b" style="left:657.8px;top:471.2px;" width="6" height="9.6" viewBox="0 0 6 9.6"><path d="M1 .800l3.800 4-3.800 4" stroke="#a0a0a0" stroke-width="1.700" fill="none"/></svg>
<svg class="b" style="left:676px;top:468.2px;" width="13" height="16" viewBox="0 0 13 16"><path d="M.500 1.200a.700.700 0 0 1 .700-.700h9.600a.700.700 0 0 1 .700.700V9h.800a.400.400 0 0 1 .400.400v5.600a.500.500 0 0 1-.500.500H.500z" fill="#fbe38e" stroke="#e8bf4a" stroke-width=".900"/><path d="M11.300 9.200v6" stroke="#e8bf4a" stroke-width=".800"/><path d="M1.400 1.400h9.200v13.200H1.400z" fill="#ffe79a" opacity=".6"/></svg>
<span class="t" style="left:695.3px;top:470.000px;font-size:12.5px;color:#000;letter-spacing:-0.539px;">Binaries</span>
<svg class="b" style="left:657.8px;top:495.2px;" width="6" height="9.6" viewBox="0 0 6 9.6"><path d="M1 .800l3.800 4-3.800 4" stroke="#a0a0a0" stroke-width="1.700" fill="none"/></svg>
<svg class="b" style="left:676px;top:492.2px;" width="13" height="16" viewBox="0 0 13 16"><path d="M.500 1.200a.700.700 0 0 1 .700-.700h9.600a.700.700 0 0 1 .700.700V9h.800a.400.400 0 0 1 .400.400v5.600a.500.500 0 0 1-.500.500H.500z" fill="#fbe38e" stroke="#e8bf4a" stroke-width=".900"/><path d="M11.300 9.200v6" stroke="#e8bf4a" stroke-width=".800"/><path d="M1.400 1.400h9.200v13.200H1.400z" fill="#ffe79a" opacity=".6"/></svg>
<span class="t" style="left:695.3px;top:494.000px;font-size:12.5px;color:#000;letter-spacing:-0.506px;">ManoRivile_Gateway</span>
<svg class="b" style="left:657.8px;top:519.2px;" width="6" height="9.6" viewBox="0 0 6 9.6"><path d="M1 .800l3.800 4-3.800 4" stroke="#a0a0a0" stroke-width="1.700" fill="none"/></svg>
<svg class="b" style="left:676px;top:516.2px;" width="13" height="16" viewBox="0 0 13 16"><path d="M.500 1.200a.700.700 0 0 1 .700-.700h9.600a.700.700 0 0 1 .700.700V9h.800a.400.400 0 0 1 .400.400v5.600a.500.500 0 0 1-.500.500H.500z" fill="#fbe38e" stroke="#e8bf4a" stroke-width=".900"/><path d="M11.300 9.200v6" stroke="#e8bf4a" stroke-width=".800"/><path d="M1.400 1.400h9.200v13.200H1.400z" fill="#ffe79a" opacity=".6"/></svg>
<span class="t" style="left:695.3px;top:518.000px;font-size:12.5px;color:#000;letter-spacing:-0.458px;">Program Files</span>
<span class="t" style="left:920.2px;top:399.000px;font-size:12.5px;color:#4c607a;letter-spacing:-0.181px;">Name</span>
<span class="t" style="left:1181px;top:399.000px;font-size:12.5px;color:#4c607a;letter-spacing:-0.152px;">Date modified</span>
<span class="t" style="left:1325.2px;top:399.000px;font-size:12.5px;color:#4c607a;letter-spacing:-0.836px;">Type</span>
<span class="t" style="left:1445px;top:399.000px;font-size:12.5px;color:#4c607a;letter-spacing:-1.009px;">Size</span>
<svg class="b" style="left:1040.5px;top:392.5px;" width="9" height="5" viewBox="0 0 9 5"><path d="M.800 4.300l3.700-3.500 3.700 3.500" stroke="#777" stroke-width=".900" fill="none"/></svg>
<div class="b" style="left:1174.5px;top:392px;width:1px;height:25px;background:#e5e5e5;"></div>
<div class="b" style="left:1318.2px;top:392px;width:1px;height:25px;background:#e5e5e5;"></div>
<div class="b" style="left:1438.4px;top:392px;width:1px;height:25px;background:#e5e5e5;"></div>
<div class="b" style="left:1518.2px;top:392px;width:1px;height:25px;background:#e5e5e5;"></div>
<svg class="b" style="left:923px;top:425.5px;" width="13" height="16" viewBox="0 0 13 16"><path d="M.500 1.200a.700.700 0 0 1 .700-.700h9.600a.700.700 0 0 1 .700.700V9h.800a.400.400 0 0 1 .400.400v5.600a.500.500 0 0 1-.500.500H.500z" fill="#fbe38e" stroke="#e8bf4a" stroke-width=".900"/><path d="M11.300 9.200v6" stroke="#e8bf4a" stroke-width=".800"/><path d="M1.400 1.400h9.200v13.200H1.400z" fill="#ffe79a" opacity=".6"/></svg>
<span class="t" style="left:941.3px;top:428.000px;font-size:12.5px;color:#000;letter-spacing:-0.993px;">~MSSETUP.T</span>
<span class="t" style="left:1181px;top:428.000px;font-size:12.5px;color:#6d6d6d;letter-spacing:-0.667px;">2023-12-07 09:21</span>
<span class="t" style="left:1325.2px;top:428.000px;font-size:12.5px;color:#6d6d6d;letter-spacing:-0.229px;">File folder</span>
<svg class="b" style="left:923px;top:446.5px;" width="13" height="16" viewBox="0 0 13 16"><path d="M.500 1.200a.700.700 0 0 1 .700-.700h9.600a.700.700 0 0 1 .700.700V9h.800a.400.400 0 0 1 .400.400v5.600a.500.500 0 0 1-.500.500H.500z" fill="#fbe38e" stroke="#e8bf4a" stroke-width=".900"/><path d="M11.300 9.200v6" stroke="#e8bf4a" stroke-width=".800"/><path d="M1.400 1.400h9.200v13.200H1.400z" fill="#ffe79a" opacity=".6"/></svg>
<span class="t" style="left:941.3px;top:449.000px;font-size:12.5px;color:#000;letter-spacing:-0.553px;">Binaries</span>
<span class="t" style="left:1181px;top:449.000px;font-size:12.5px;color:#6d6d6d;letter-spacing:-0.667px;">2024-09-16 14:31</span>
<span class="t" style="left:1325.2px;top:449.000px;font-size:12.5px;color:#6d6d6d;letter-spacing:-0.229px;">File folder</span>
<svg class="b" style="left:923px;top:467.5px;" width="13" height="16" viewBox="0 0 13 16"><path d="M.500 1.200a.700.700 0 0 1 .700-.700h9.600a.700.700 0 0 1 .700.700V9h.800a.400.400 0 0 1 .400.400v5.600a.500.500 0 0 1-.500.500H.500z" fill="#fbe38e" stroke="#e8bf4a" stroke-width=".900"/><path d="M11.300 9.200v6" stroke="#e8bf4a" stroke-width=".800"/><path d="M1.400 1.400h9.200v13.200H1.400z" fill="#ffe79a" opacity=".6"/></svg>
<span class="t" style="left:941.3px;top:470.000px;font-size:12.5px;color:#000;letter-spacing:-0.506px;">ManoRivile_Gateway</span>
<span class="t" style="left:1181px;top:470.000px;font-size:12.5px;color:#6d6d6d;letter-spacing:-0.667px;">2023-12-05 15:17</span>
<span class="t" style="left:1325.2px;top:470.000px;font-size:12.5px;color:#6d6d6d;letter-spacing:-0.229px;">File folder</span>
<svg class="b" style="left:923px;top:488.5px;" width="13" height="16" viewBox="0 0 13 16"><path d="M.500 1.200a.700.700 0 0 1 .700-.700h9.600a.700.700 0 0 1 .700.700V9h.800a.400.400 0 0 1 .400.400v5.600a.500.500 0 0 1-.500.500H.500z" fill="#fbe38e" stroke="#e8bf4a" stroke-width=".900"/><path d="M11.300 9.200v6" stroke="#e8bf4a" stroke-width=".800"/><path d="M1.400 1.400h9.200v13.200H1.400z" fill="#ffe79a" opacity=".6"/></svg>
<span class="t" style="left:941.3px;top:491.000px;font-size:12.5px;color:#000;letter-spacing:-0.466px;">Program Files</span>
<span class="t" style="left:1181px;top:491.000px;font-size:12.5px;color:#6d6d6d;letter-spacing:-0.667px;">2025-03-26 10:54</span>
<span class="t" style="left:1325.2px;top:491.000px;font-size:12.5px;color:#6d6d6d;letter-spacing:-0.229px;">File folder</span>
<svg class="b" style="left:923px;top:509.5px;" width="13" height="16" viewBox="0 0 13 16"><path d="M.500 1.200a.700.700 0 0 1 .700-.700h9.600a.700.700 0 0 1 .700.700V9h.800a.400.400 0 0 1 .400.400v5.600a.500.500 0 0 1-.500.500H.500z" fill="#fbe38e" stroke="#e8bf4a" stroke-width=".900"/><path d="M11.300 9.200v6" stroke="#e8bf4a" stroke-width=".800"/><path d="M1.400 1.400h9.200v13.200H1.400z" fill="#ffe79a" opacity=".6"/></svg>
<span class="t" style="left:941.3px;top:512.000px;font-size:12.5px;color:#000;letter-spacing:-0.458px;">Program Files (x86)</span>
<span class="t" style="left:1181px;top:512.000px;font-size:12.5px;color:#6d6d6d;letter-spacing:-0.667px;">2024-06-14 12:21</span>
<span class="t" style="left:1325.2px;top:512.000px;font-size:12.5px;color:#6d6d6d;letter-spacing:-0.229px;">File folder</span>
<div class="b" style="left:901px;top:531px;width:644px;height:4px;overflow:hidden;"><div class="b" style="left:22px;top:0;width:13px;height:4px;background:#fbe38e;border-top:1px solid #e8bf4a"></div><span class="t2" style="left:40px;top:1.500px;font-size:12.300px;color:#000">PIU_BALM</span><span class="t2" style="left:280px;top:1.500px;font-size:12.300px;color:#6d6d6d;letter-spacing:-.4px">2024-10-30 09:22</span><span class="t2" style="left:424px;top:1.500px;font-size:12.300px;color:#6d6d6d;letter-spacing:-.4px">File folder</span></div>
<div class="b" style="left:1545px;top:392px;width:16px;height:143px;background:#f0f0f0;"></div>
<div class="b" style="left:1545.5px;top:409px;width:14.6px;height:61px;background:#cdcdcd;"></div>
<svg class="b" style="left:1548.2px;top:398.3px;" width="9" height="6.6" viewBox="0 0 9 6.6"><path d="M1 5l3.500-3.500L8 5" stroke="#505050" stroke-width="1.900" fill="none"/></svg>
<svg class="b" style="left:1548.2px;top:523.5px;" width="9" height="6.6" viewBox="0 0 9 6.6"><path d="M1 1.500L4.500 5 8 1.500" stroke="#505050" stroke-width="1.900" fill="none"/></svg>
<span class="t" style="left:699.5px;top:552.000px;font-size:12.5px;color:#000;letter-spacing:-0.395px;">File name:</span>
<div class="b" style="left:721px;top:563px;width:7px;height:1px;background:#000;"></div>
<span class="t" style="left:687px;top:577.000px;font-size:12.5px;color:#000;letter-spacing:-0.704px;">Save as type:</span>
<div class="b" style="left:730px;top:588px;width:4px;height:1px;background:#000;"></div>
<div class="b" style="left:759px;top:546px;width:797px;height:23px;background:#fff;border:1px solid #7a7a7a;"></div>
<span class="t" style="left:765px;top:551.000px;font-size:12.5px;color:#000;letter-spacing:-0.574px;">Prekės, paslaugos.xlsx</span>
<div class="b" style="left:759px;top:571px;width:797px;height:23px;background:#e1e1e1;border:1px solid #adadad;"></div>
<span class="t" style="left:763px;top:577.000px;font-size:12.5px;color:#000;letter-spacing:-0.291px;">Microsoft Excel Worksheet (*.xlsx)</span>
<svg class="b" style="left:1542.5px;top:555.4000000000001px;" width="9" height="6" viewBox="0 0 9 6"><path d="M.700 .800l3.800 3.800L8.300 .800" stroke="#3c3c3c" stroke-width="1.050" fill="none"/></svg>
<svg class="b" style="left:1542.5px;top:580.2px;" width="9" height="6" viewBox="0 0 9 6"><path d="M.700 .800l3.800 3.800L8.300 .800" stroke="#3c3c3c" stroke-width="1.050" fill="none"/></svg>
<svg class="b" style="left:646.5px;top:626.3px;" width="10" height="7" viewBox="0 0 10 7"><path d="M.800 6l4.200-4.200L9.200 6" stroke="#404040" stroke-width="2" fill="none"/></svg>
<span class="t" style="left:664.2px;top:624.000px;font-size:12.5px;color:#000;letter-spacing:-0.370px;">Hide Folders</span>
<div class="b" style="left:1357px;top:615px;width:86px;height:24px;background:#e1e1e1;border:2px solid #0078d7;"></div>
<span class="t" style="left:1387.8px;top:621.000px;font-size:12.5px;color:#000;letter-spacing:-1.067px;">Save</span>
<div class="b" style="left:1388px;top:632px;width:6.3px;height:1px;background:#000;"></div>
<div class="b" style="left:1457px;top:615px;width:86px;height:24px;background:#e1e1e1;border:1px solid #adadad;"></div>
<span class="t" style="left:1481.3px;top:621.000px;font-size:12.5px;color:#000;letter-spacing:-0.224px;">Cancel</span>
<svg class="b" style="left:1549px;top:641px;" width="11" height="11" viewBox="0 0 11 11"><g fill="#b0b0b0"><rect x="8" y="0" width="2" height="2"/><rect x="4" y="4" width="2" height="2"/><rect x="8" y="4" width="2" height="2"/><rect x="0" y="8" width="2" height="2"/><rect x="4" y="8" width="2" height="2"/><rect x="8" y="8" width="2" height="2"/></g></svg>
<div class="b" style="left:60px;top:323px;width:182px;height:31px;border:3px solid #ff6a13;border-radius:2px;"></div>
<div class="b" style="left:2.300px;top:483px;width:52.700px;height:56px;border:3px solid #ff6a13;border-radius:2px;"></div>
<div class="b" style="left:1352px;top:608px;width:95px;height:35px;border:3px solid #ff6a13;border-radius:2px;"></div>
<svg class="b" style="left:0;top:0" width="1805" height="710" viewBox="0 0 1805 710"><path d="M1501.600 103.500L1329 301" stroke="#ff6a13" stroke-width="2.800" fill="none"/><path d="M1319.600 311.400L1325.900 297.600L1332.800 303.300z" fill="#ff6a13"/></svg>
</body></html>
